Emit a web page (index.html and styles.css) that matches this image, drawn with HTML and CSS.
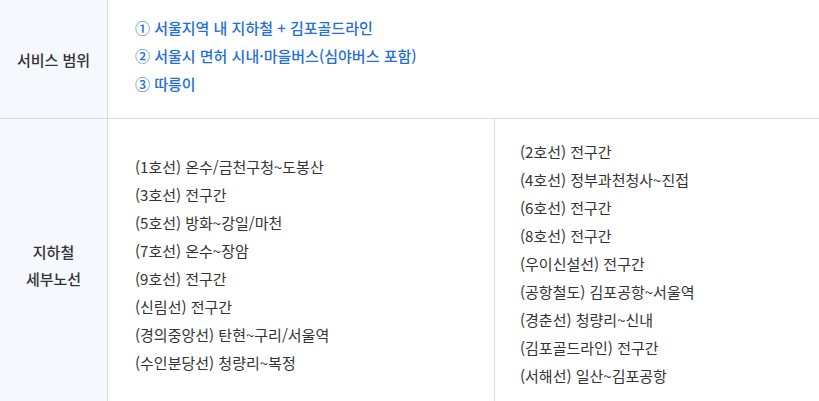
FILE: index.html
```html
<!DOCTYPE html>
<html lang="ko">
<head>
<meta charset="utf-8">
<link rel="stylesheet" href="styles.css">
</head>
<body>
<div class="table">
  <div class="row">
    <div class="th">서비스 범위</div>
    <div class="td td-service">
      <ul class="blue-list">
        <li>① 서울지역 내 지하철 + 김포골드라인</li>
        <li>② 서울시 면허 시내·마을버스(심야버스 포함)</li>
        <li>③ 따릉이</li>
      </ul>
    </div>
  </div>
  <div class="row">
    <div class="th">지하철<br>세부노선</div>
    <div class="td td-lines">
      <ul class="line-list col-left">
        <li>(1호선) 온수/금천구청~도봉산</li>
        <li>(3호선) 전구간</li>
        <li>(5호선) 방화~강일/마천</li>
        <li>(7호선) 온수~장암</li>
        <li>(9호선) 전구간</li>
        <li>(신림선) 전구간</li>
        <li>(경의중앙선) 탄현~구리/서울역</li>
        <li>(수인분당선) 청량리~복정</li>
      </ul>
      <ul class="line-list col-right">
        <li>(2호선) 전구간</li>
        <li>(4호선) 정부과천청사~진접</li>
        <li>(6호선) 전구간</li>
        <li>(8호선) 전구간</li>
        <li>(우이신설선) 전구간</li>
        <li>(공항철도) 김포공항~서울역</li>
        <li>(경춘선) 청량리~신내</li>
        <li>(김포골드라인) 전구간</li>
        <li>(서해선) 일산~김포공항</li>
      </ul>
    </div>
  </div>
</div>
</body>
</html>
```

FILE: styles.css
```css
* { box-sizing: border-box; }
html, body {
  margin: 0;
  padding: 0;
  background: #fff;
}
body {
  font-family: "Noto Sans CJK KR", "Noto Sans", sans-serif;
  font-size: 15px;
  color: #333;
}
.table {
  width: 819px;
}
.row {
  display: grid;
  grid-template-columns: 108px 1fr;
  border-bottom: 1px solid #ddd;
}
.th {
  background: #f5f8fe;
  border-right: 1px solid #ddd;
  display: flex;
  align-items: center;
  justify-content: center;
  text-align: center;
  font-weight: 500;
  color: #333;
  line-height: 27px;
}
.td-service {
  padding: 14px 27px 20px;
}
ul {
  list-style: none;
  margin: 0;
  padding: 0;
}
li {
  line-height: 28px;
  white-space: nowrap;
}
.blue-list {
  color: #1f6fdc;
  font-weight: 500;
}
.td-lines {
  display: grid;
  grid-template-columns: 386px 1fr;
}
.line-list {
  align-self: center;
}
.col-left {
  padding-left: 27px;
}
.col-right {
  border-left: 1px solid #ddd;
  padding: 19px 0 20px 25px;
}
```
